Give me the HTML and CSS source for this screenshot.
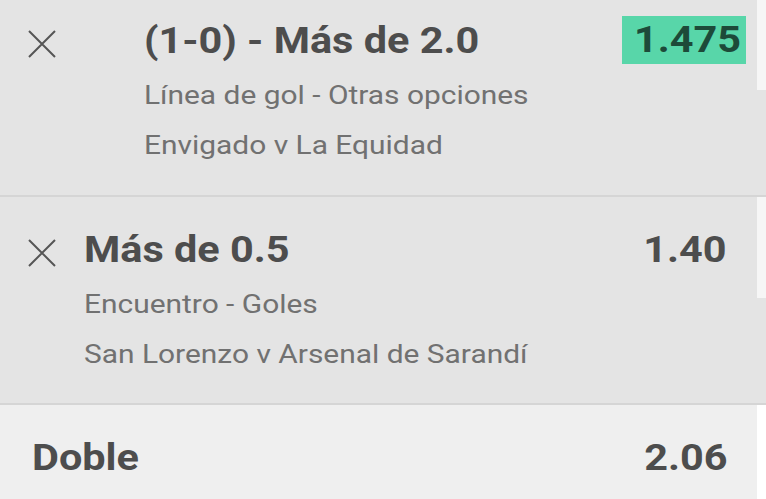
FILE: index.html
```html
<!DOCTYPE html>
<html lang="es">
<head>
<meta charset="utf-8">
<link rel="stylesheet" href="styles.css">
</head>
<body>
<div class="slip">
  <div class="card card-first">
    <div class="card-main">
      <button class="remove" aria-label="Quitar">
        <svg viewBox="0 0 28 28" width="28" height="28"><path d="M1 1 L27 27 M27 1 L1 27" stroke="#555" stroke-width="2" fill="none"/></svg>
      </button>
      <div class="info info-indented">
        <div class="title"><span class="sx">(1-0) - Más de 2.0</span></div>
        <div class="sub"><span class="sx">Línea de gol - Otras opciones</span></div>
        <div class="sub"><span class="sx">Envigado v La Equidad</span></div>
      </div>
      <div class="odds odds-hl"><span class="sx-r">1.475</span></div>
    </div>
    <div class="edge"><div class="edge-fill edge-fill-1"></div></div>
  </div>
  <div class="card card-second">
    <div class="card-main">
      <button class="remove" aria-label="Quitar">
        <svg viewBox="0 0 28 28" width="28" height="28"><path d="M1 1 L27 27 M27 1 L1 27" stroke="#555" stroke-width="2" fill="none"/></svg>
      </button>
      <div class="info">
        <div class="title"><span class="sx">Más de 0.5</span></div>
        <div class="sub"><span class="sx">Encuentro - Goles</span></div>
        <div class="sub"><span class="sx">San Lorenzo v Arsenal de Sarandí</span></div>
      </div>
      <div class="odds"><span class="sx-r">1.40</span></div>
    </div>
    <div class="edge"><div class="edge-fill edge-fill-2"></div></div>
  </div>
  <div class="total">
    <div class="total-main">
      <div class="total-label"><span class="sx">Doble</span></div>
      <div class="total-odds"><span class="sx-r">2.06</span></div>
    </div>
    <div class="edge edge-white"></div>
  </div>
</div>
</body>
</html>
```

FILE: styles.css
```css
html, body {
  margin: 0;
  padding: 0;
  background: #e4e4e4;
  font-family: Roboto, "Liberation Sans", Arial, sans-serif;
}
.slip {
  display: flex;
  flex-direction: column;
  width: 766px;
  height: 499px;
  overflow: hidden;
}
.sx, .sx-r {
  display: inline-block;
  white-space: nowrap;
  transform: scaleX(1.15);
  transform-origin: left center;
}
.sx-r { transform-origin: right center; }
.card {
  display: flex;
  background: #e4e4e4;
  border-bottom: 2px solid #d5d5d5;
}
.card-first { height: 195px; }
.card-second { height: 206px; }
.card-main {
  flex: 1;
  display: flex;
  align-items: flex-start;
  padding-left: 28px;
}
.card-first .card-main { padding-top: 19px; padding-right: 11px; }
.card-second .card-main { padding-top: 31px; padding-right: 31px; }
.remove {
  flex: none;
  width: 28px;
  height: 28px;
  padding: 0;
  border: 0;
  background: none;
  margin-top: 11px;
  display: block;
}
.remove svg { display: block; }
.info {
  flex: 1;
  padding-left: 28px;
}
.info-indented { padding-left: 88px; }
.title {
  font-size: 36px;
  font-weight: 700;
  line-height: 44px;
  color: #4d4d4d;
  margin-bottom: 7px;
}
.sub {
  font-size: 26px;
  line-height: 50px;
  color: #717171;
}
.odds {
  font-size: 36px;
  font-weight: 700;
  line-height: 44px;
  color: #4d4d4d;
  text-align: right;
}
.odds-hl {
  background: #58d6a9;
  color: #1d4a39;
  line-height: 48px;
  width: 124px;
  box-sizing: border-box;
  padding: 0 5px 0 0;
  margin-top: -3px;
}
.edge {
  width: 9px;
  flex: none;
}
.edge-fill { background: #f6f6f6; }
.edge-fill-1 { height: 90px; }
.edge-fill-2 { height: 101px; }
.edge-white { background: #ffffff; }
.total {
  flex: 1;
  display: flex;
  background: #efefef;
}
.total-main {
  flex: 1;
  display: flex;
  justify-content: space-between;
  align-items: center;
  padding: 12px 30px 0 32px;
}
.total-label, .total-odds {
  font-size: 36px;
  font-weight: 700;
  line-height: 44px;
  color: #4d4d4d;
}
```
